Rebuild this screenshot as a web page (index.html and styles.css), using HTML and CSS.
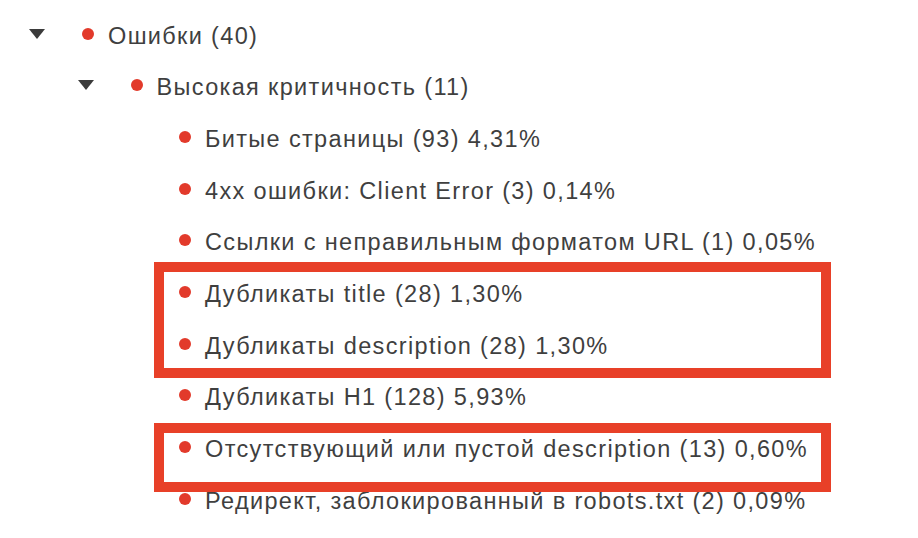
FILE: index.html
```html
<!DOCTYPE html>
<html lang="ru">
<head>
<meta charset="utf-8">
<title>Ошибки</title>
<link rel="stylesheet" href="styles.css">
</head>
<body>
<div class="page">
  <ul class="tree">
    <li>
      <div class="row">
        <span class="toggle"><svg class="caret" width="16" height="10" viewBox="0 0 16 10"><path d="M0 0H16L8 10Z"/></svg></span><span class="dot"></span>Ошибки (40)
      </div>
      <ul class="tree nested">
        <li>
          <div class="row">
            <span class="toggle"><svg class="caret" width="16" height="10" viewBox="0 0 16 10"><path d="M0 0H16L8 10Z"/></svg></span><span class="dot"></span>Высокая критичность (11)
          </div>
          <ul class="tree nested">
            <li><div class="row"><span class="toggle"></span><span class="dot"></span>Битые страницы (93) 4,31%</div></li>
            <li><div class="row"><span class="toggle"></span><span class="dot"></span>4xx ошибки: Client Error (3) 0,14%</div></li>
            <li><div class="row"><span class="toggle"></span><span class="dot"></span>Ссылки с неправильным форматом URL (1) 0,05%</div></li>
            <li><div class="row"><span class="toggle"></span><span class="dot"></span>Дубликаты title (28) 1,30%</div></li>
            <li><div class="row"><span class="toggle"></span><span class="dot"></span>Дубликаты description (28) 1,30%</div></li>
            <li><div class="row"><span class="toggle"></span><span class="dot"></span>Дубликаты H1 (128) 5,93%</div></li>
            <li><div class="row"><span class="toggle"></span><span class="dot"></span>Отсутствующий или пустой description (13) 0,60%</div></li>
            <li><div class="row"><span class="toggle"></span><span class="dot"></span>Редирект, заблокированный в robots.txt (2) 0,09%</div></li>
          </ul>
        </li>
      </ul>
    </li>
  </ul>
  <div class="mark mark-duplicates"></div>
  <div class="mark mark-empty"></div>
</div>
</body>
</html>
```

FILE: styles.css
```css
html, body {
  margin: 0;
  padding: 0;
  background: #ffffff;
}

.page {
  position: relative;
  width: 918px;
  height: 538px;
  overflow: hidden;
  padding: 10.5px 0 0 29px;
  box-sizing: border-box;
  font-family: "Liberation Sans", Arial, sans-serif;
  font-size: 23.5px;
  letter-spacing: 1.35px;
  color: #3f3f3f;
}

.tree {
  list-style: none;
  margin: 0;
  padding: 0;
}

.tree.nested {
  padding-left: 48.5px;
}

.row {
  height: 51.7px;
  line-height: 51.7px;
  white-space: nowrap;
}

.toggle {
  display: inline-block;
  width: 53px;
  height: 0;
  letter-spacing: 0;
}

.caret {
  display: inline-block;
  vertical-align: baseline;
  margin-bottom: 5px;
  fill: #3b3b3b;
}

.dot {
  display: inline-block;
  width: 12px;
  height: 12px;
  margin: 0 14px 4px 0;
  border-radius: 50%;
  background: #e23a2b;
  vertical-align: baseline;
  letter-spacing: 0;
}

/* annotation frames drawn over the list */
.mark {
  position: absolute;
  left: 154px;
  width: 677px;
  border: 10px solid #e84028;
  box-sizing: border-box;
}

.mark-duplicates {
  top: 262px;
  height: 116px;
}

.mark-empty {
  top: 423px;
  height: 69px;
}
```
